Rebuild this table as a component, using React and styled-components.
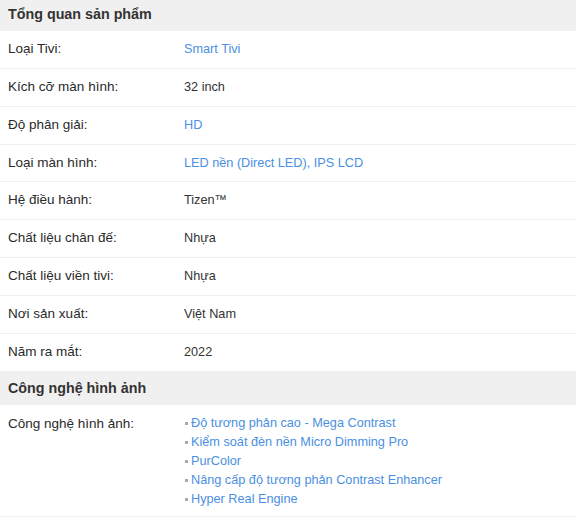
import React from 'react';
import styled, { createGlobalStyle } from 'styled-components';

const GlobalStyle = createGlobalStyle`
  body {
    margin: 0;
    background: #fff;
    font-family: "Liberation Sans", Arial, sans-serif;
    color: #333;
  }
`;

const Specs = styled.div`
  width: 576px;
  margin-top: -2px;
`;

const SectionTitle = styled.h3`
  margin: 0;
  padding: 0 8px;
  height: 33px;
  line-height: 33px;
  background: #f0f0f0;
  font-size: 14.3px;
  font-weight: bold;
  color: #333;
`;

const Row = styled.div`
  display: grid;
  grid-template-columns: 176px 1fr;
  padding: ${(props) => (props.list ? '9px 8px 7px' : '8px')};
  border-bottom: 1px solid #eee;
  font-size: 13.5px;
  line-height: ${(props) => (props.list ? '19px' : '20.86px')};
`;

const Label = styled.div`
  color: #2a2a2a;
`;

const Value = styled.div`
  font-size: 12.7px;
  color: ${(props) => (props.link ? '#4a90e2' : '#333')};
`;

const List = styled.ul`
  margin: 0;
  padding: 0;
  list-style: none;
`;

const Item = styled.li`
  position: relative;
  padding-left: 7px;
  font-size: 12.7px;
  color: #4a90e2;

  &::before {
    content: '';
    position: absolute;
    left: 1px;
    top: 8px;
    width: 3px;
    height: 3px;
    background: #aaa;
  }
`;

const overview = [
  { label: 'Loại Tivi:', value: 'Smart Tivi', link: true },
  { label: 'Kích cỡ màn hình:', value: '32 inch' },
  { label: 'Độ phân giải:', value: 'HD', link: true },
  { label: 'Loại màn hình:', value: 'LED nền (Direct LED), IPS LCD', link: true },
  { label: 'Hệ điều hành:', value: 'Tizen™' },
  { label: 'Chất liệu chân đế:', value: 'Nhựa' },
  { label: 'Chất liệu viền tivi:', value: 'Nhựa' },
  { label: 'Nơi sản xuất:', value: 'Việt Nam' },
  { label: 'Năm ra mắt:', value: '2022' },
];

const imageTech = [
  'Độ tương phản cao - Mega Contrast',
  'Kiểm soát đèn nền Micro Dimming Pro',
  'PurColor',
  'Nâng cấp độ tương phản Contrast Enhancer',
  'Hyper Real Engine',
];

const App = () => {
  return (
    <Specs>
      <GlobalStyle />
      <SectionTitle>Tổng quan sản phẩm</SectionTitle>
      {overview.map((row) => (
        <Row key={row.label}>
          <Label>{row.label}</Label>
          <Value link={row.link}>{row.value}</Value>
        </Row>
      ))}
      <SectionTitle>Công nghệ hình ảnh</SectionTitle>
      <Row list>
        <Label>Công nghệ hình ảnh:</Label>
        <List>
          {imageTech.map((t) => (
            <Item key={t}>{t}</Item>
          ))}
        </List>
      </Row>
    </Specs>
  );
};

export default App;
